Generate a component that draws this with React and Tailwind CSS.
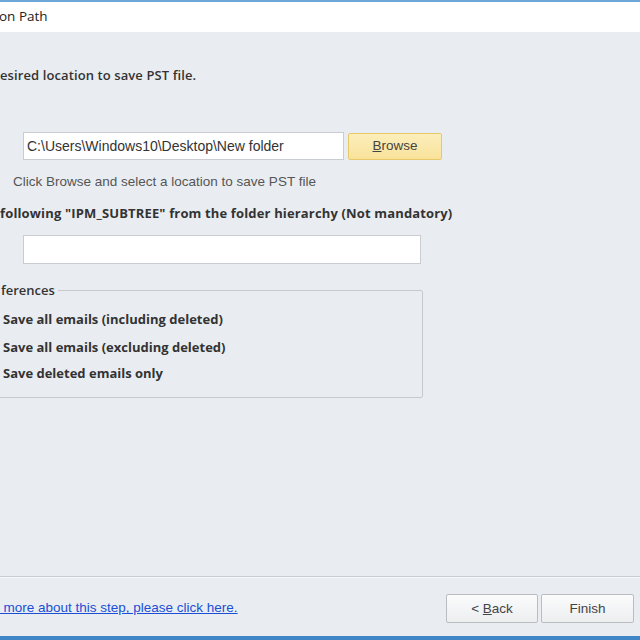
export default function App() {
  const ui = { fontFamily: '"Open Sans", "Noto Sans", sans-serif' };
  const classic = { fontFamily: '"Liberation Sans", Arial, sans-serif' };
  return (
    <div className="w-[640px] h-[640px] bg-[#e9edf1] flex flex-col overflow-hidden text-[#333]" style={ui}>
      <div className="h-[2px] bg-[#6da6d9]" />
      <div className="h-[30px] bg-white flex items-center text-[13.5px] text-[#222] leading-none">
        <span className="-ml-[1px]">on Path</span>
      </div>
      <div className="flex-1 flex flex-col">
        <div className="mt-[35px] h-[16px] flex items-center text-[13px] font-semibold leading-none text-[#333] tracking-[0.1px]">
          esired location to save PST file.
        </div>
        <div className="mt-[49px] flex items-center h-[28px]">
          <div className="ml-[23px] w-[321px] h-[28px] bg-white border border-[#c9ccd0] flex items-center pl-[3px] text-[14px] text-[#333] leading-none" style={classic}>
            C:\Users\Windows10\Desktop\New folder
          </div>
          <div className="ml-[4px] w-[94px] h-[27px] rounded-[2px] border border-[#e8c96a] bg-gradient-to-b from-[#fcefbc] to-[#f9e29a] flex items-center justify-center text-[13.5px] text-[#444] leading-none" style={classic}>
            <span><span className="underline">B</span>rowse</span>
          </div>
        </div>
        <div className="mt-[14px] ml-[13px] h-[16px] flex items-center text-[13.5px] text-[#555] leading-none" style={classic}>
          Click Browse and select a location to save PST file
        </div>
        <div className="mt-[15px] h-[16px] flex items-center text-[13px] font-bold leading-none text-[#333] tracking-[0.15px]">
          following "IPM_SUBTREE" from the folder hierarchy (Not mandatory)
        </div>
        <div className="mt-[14px] ml-[23px] w-[398px] h-[29px] bg-white border border-[#c9ccd0]" />
        <div className="relative mt-[26px] -ml-[10px] w-[433px] h-[108px] border border-[#c5c9ce] rounded-[2px]">
          <div className="absolute -top-[9px] left-[0px] bg-[#e9edf1] pl-[10px] pr-[3px] text-[13px] font-semibold leading-[16px] text-[#333]">
            ferences
          </div>
          <div className="flex flex-col pl-[12px] pt-[20px] text-[13px] font-bold text-[#333] leading-none">
            <div className="h-[16px] flex items-center">Save all emails (including deleted)</div>
            <div className="h-[16px] mt-[12px] flex items-center">Save all emails (excluding deleted)</div>
            <div className="h-[16px] mt-[10px] flex items-center">Save deleted emails only</div>
          </div>
        </div>
      </div>
      <div className="h-[1px] bg-[#c9cdd2]" />
      <div className="h-[1px] bg-[#f7f9fb]" />
      <div className="h-[58px] flex items-center justify-between">
        <a className="mt-[2px] -ml-[4px] text-[13.5px] text-[#1a4fd6] underline leading-none" style={classic}>
          t more about this step, please click here.
        </a>
        <div className="flex gap-[3px] mr-[6px] mt-[3px]">
          <div className="w-[92px] h-[29px] bg-gradient-to-b from-[#fbfbfb] to-[#eceef0] border border-[#b9bcc0] rounded-[2px] flex items-center justify-center text-[13.5px] text-[#444] leading-none" style={classic}>
            <span>&lt; <span className="underline">B</span>ack</span>
          </div>
          <div className="w-[93px] h-[29px] bg-gradient-to-b from-[#fbfbfb] to-[#eceef0] border border-[#b9bcc0] rounded-[2px] flex items-center justify-center text-[13.5px] text-[#444] leading-none" style={classic}>
            Finish
          </div>
        </div>
      </div>
      <div className="h-[4px] bg-[#3f86c8]" />
    </div>
  );
}
